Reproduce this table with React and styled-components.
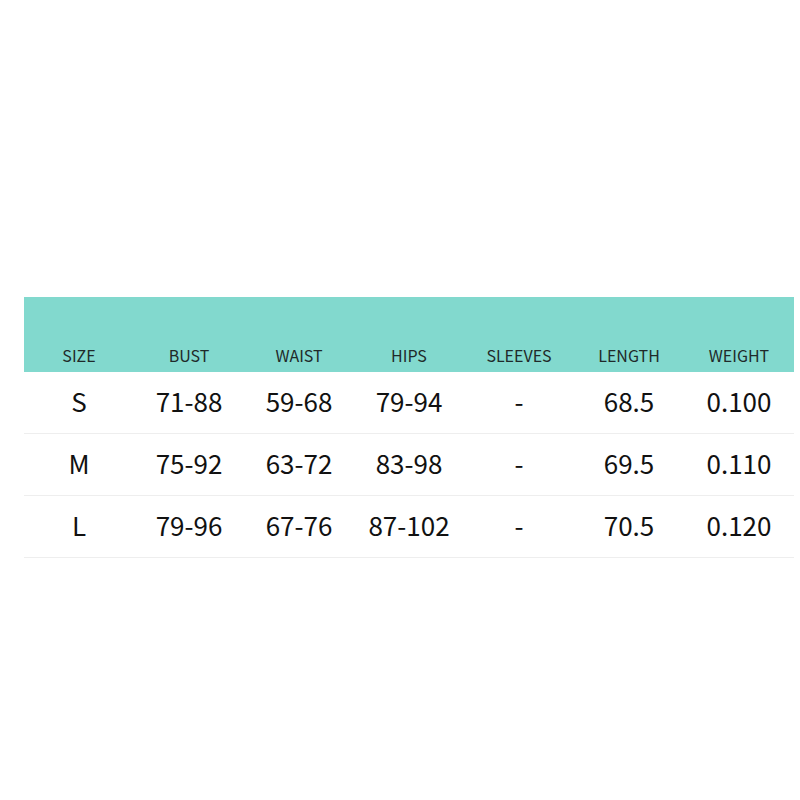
import React from 'react';
import styled, { createGlobalStyle } from 'styled-components';

const GlobalStyle = createGlobalStyle`
  body {
    margin: 0;
    background: #ffffff;
    font-family: "Noto Sans CJK SC", "Noto Sans", sans-serif;
  }
`;

const Page = styled.div`
  width: 800px;
  height: 800px;
  padding: 297px 0 0 24px;
  box-sizing: border-box;
`;

const Table = styled.div`
  width: 770px;
  display: grid;
  grid-template-columns: repeat(7, 110px);
`;

const HeadCell = styled.div`
  height: 75px;
  background: #82d9ce;
  color: #1f2a2a;
  font-size: 16px;
  display: flex;
  align-items: flex-end;
  justify-content: center;
  padding-bottom: 5px;
  box-sizing: border-box;
`;

const Cell = styled.div`
  height: 62px;
  border-bottom: 1px solid #eeeeee;
  box-sizing: border-box;
  display: flex;
  align-items: center;
  justify-content: center;
  padding-bottom: 4px;
  font-size: 26px;
  color: #111111;
`;

const headers = ['SIZE', 'BUST', 'WAIST', 'HIPS', 'SLEEVES', 'LENGTH', 'WEIGHT'];

const rows = [
  ['S', '71-88', '59-68', '79-94', '-', '68.5', '0.100'],
  ['M', '75-92', '63-72', '83-98', '-', '69.5', '0.110'],
  ['L', '79-96', '67-76', '87-102', '-', '70.5', '0.120'],
];

const App = () => {
  return (
    <>
      <GlobalStyle />
      <Page>
        <Table>
          {headers.map((h) => (
            <HeadCell key={h}>{h}</HeadCell>
          ))}
          {rows.map((row) =>
            row.map((v, i) => <Cell key={row[0] + i}>{v}</Cell>)
          )}
        </Table>
      </Page>
    </>
  );
};

export default App;
